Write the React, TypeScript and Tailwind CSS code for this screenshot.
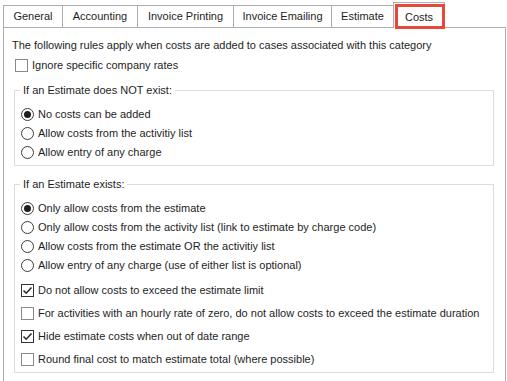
import type { ReactNode } from "react";

const TABS = [
  { label: "General", w: "w-[59px]" },
  { label: "Accounting", w: "w-[75px]" },
  { label: "Invoice Printing", w: "w-[96px]" },
  { label: "Invoice Emailing", w: "w-[98px]" },
  { label: "Estimate", w: "w-[62px]" },
];

function Radio({ checked, children }: { checked?: boolean; children: ReactNode }) {
  return (
    <div className="flex items-center h-[19px]">
      <span className="w-[13px] h-[13px] rounded-full border border-[#3c3c3c] bg-white flex items-center justify-center shrink-0">
        {checked && <span className="w-[7px] h-[7px] rounded-full bg-[#1f1f1f]" />}
      </span>
      <span className="ml-[4px] whitespace-nowrap">{children}</span>
    </div>
  );
}

function Check({
  checked,
  children,
  h = "h-[23px]",
}: {
  checked?: boolean;
  children: ReactNode;
  h?: string;
}) {
  return (
    <div className={`flex items-center ${h}`}>
      <span
        className={`w-[13px] h-[13px] border bg-white flex items-center justify-center shrink-0 ${
          checked ? "border-[#333333]" : "border-[#8a8a8a]"
        }`}
      >
        {checked && (
          <svg width="11" height="11" viewBox="0 0 11 11">
            <path d="M1.5 5.5 L4.2 8.2 L9.5 2.5" fill="none" stroke="#2b2b2b" strokeWidth="1.6" />
          </svg>
        )}
      </span>
      <span className="ml-[4px] whitespace-nowrap">{children}</span>
    </div>
  );
}

function GroupBox({ title, children, className }: { title: string; children: ReactNode; className?: string }) {
  return (
    <div className={`relative ml-[10px] w-[480px] border border-[#dcdcdc] pl-[6px] ${className ?? ""}`}>
      <span className="absolute -top-[8px] left-[5px] bg-white px-[3px] leading-[14px]">{title}</span>
      {children}
    </div>
  );
}

export default function App() {
  return (
    <div
      className="relative w-[507px] h-[381px] overflow-hidden bg-white text-[11px] text-[#1e1e1e]"
      style={{ fontFamily: '"Liberation Sans", Arial, sans-serif' }}
    >
      {/* tab strip */}
      <div className="flex items-end h-[27px] pl-[3px]">
        {TABS.map((t) => (
          <div
            key={t.label}
            className={`${t.w} h-[22px] border-l border-t border-[#adadad] bg-white flex items-center justify-center`}
          >
            {t.label}
          </div>
        ))}
        <div className="relative z-10 w-[52px] h-[26px] -mb-px border-l border-t border-r border-[#adadad] bg-white flex items-start justify-center pt-[6px]">
          Costs
        </div>
      </div>

      {/* red highlight */}
      <div className="absolute left-[395px] top-[4px] w-[50px] h-[25px] border-[3px] border-[#e8473c] z-20" />

      {/* panel */}
      <div className="ml-[3px] w-[503px] h-[360px] border-l border-t border-r border-[#adadad] pt-[10px]">
        <p className="pl-[8px] leading-[14px] whitespace-nowrap">
          The following rules apply when costs are added to cases associated with this category
        </p>
        <div className="pl-[11px] mt-[3px]">
          <Check h="h-[20px]">Ignore specific company rates</Check>
        </div>

        <GroupBox title="If an Estimate does NOT exist:" className="mt-[15px] pt-[14px] pb-[3px]">
          <Radio checked>No costs can be added</Radio>
          <Radio>Allow costs from the activitiy list</Radio>
          <Radio>Allow entry of any charge</Radio>
        </GroupBox>

        <GroupBox title="If an Estimate exists:" className="mt-[18px] pt-[14px] pb-[1px]">
          <Radio checked>Only allow costs from the estimate</Radio>
          <Radio>Only allow costs from the activity list (link to estimate by charge code)</Radio>
          <Radio>Allow costs from the estimate OR the activitiy list</Radio>
          <Radio>Allow entry of any charge (use of either list is optional)</Radio>
          <div className="mt-[4px]">
            <Check checked>Do not allow costs to exceed the estimate limit</Check>
            <Check>For activities with an hourly rate of zero, do not allow costs to exceed the estimate duration</Check>
            <Check checked>Hide estimate costs when out of date range</Check>
            <Check>Round final cost to match estimate total (where possible)</Check>
          </div>
        </GroupBox>
      </div>
    </div>
  );
}
